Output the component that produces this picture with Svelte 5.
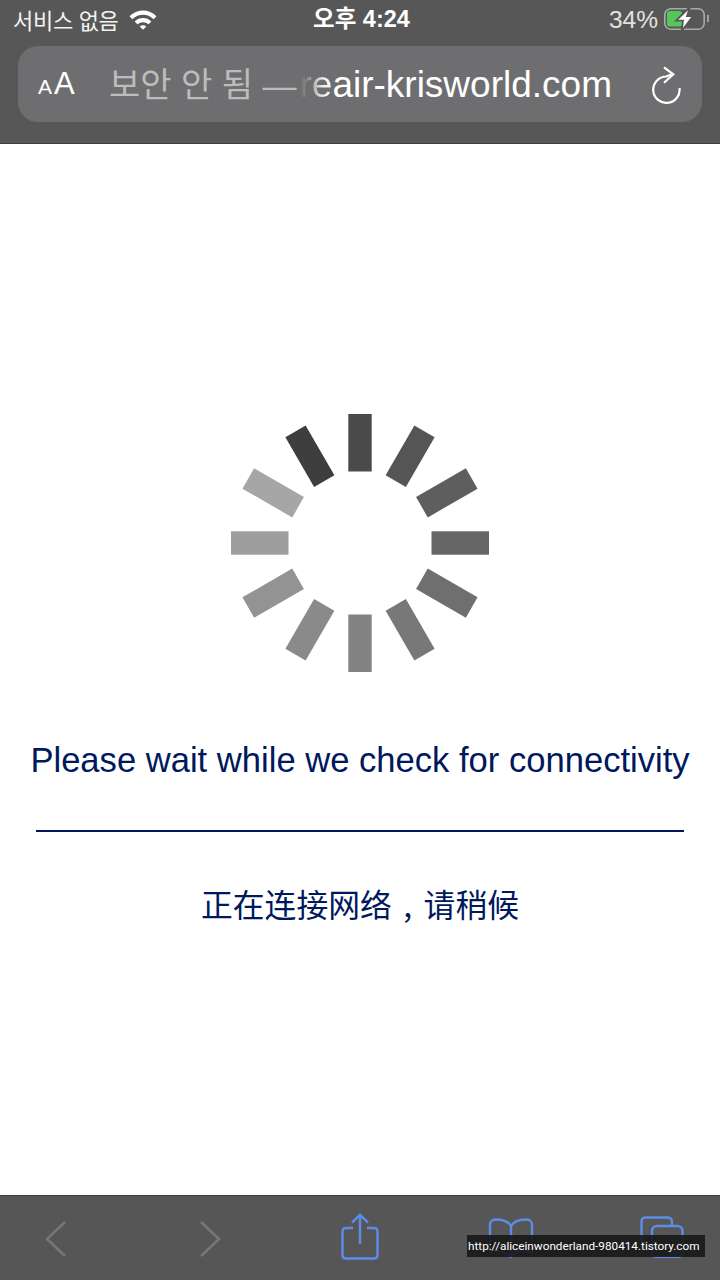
<script>
  const bars = [
    '#4a4a4a', '#555555', '#5e5e5e', '#666666', '#6f6f6f', '#787878',
    '#828282', '#8a8a8a', '#939393', '#9e9e9e', '#a6a6a6', '#3e3e3e'
  ]
</script>

<div class="screen">
  <header>
    <div class="status">
      <div class="left">
        <span class="carrier">서비스 없음</span>
        <svg class="wifi" width="30" height="22" viewBox="0 0 30 22">
          <path d="M1.5 8.2 C9 0.6 21 0.6 28.5 8.2 L25.6 11.2 C19.6 5.4 10.4 5.4 4.4 11.2 Z" fill="#fff"/>
          <path d="M6.6 13.4 C11.4 8.8 18.6 8.8 23.4 13.4 L20.5 16.3 C17.2 13.4 12.8 13.4 9.5 16.3 Z" fill="#fff"/>
          <path d="M11.6 18.4 C13.6 16.7 16.4 16.7 18.4 18.4 L15 21.8 Z" fill="#fff"/>
        </svg>
      </div>
      <span class="time">오후 4:24</span>
      <div class="right">
        <span class="pct">34%</span>
        <svg width="48" height="26" viewBox="0 0 48 26">
          <rect x="2.8" y="2.8" width="39.4" height="20.4" rx="6" fill="none" stroke="#a9a9a9" stroke-width="1.6"/>
          <rect x="5" y="5" width="15" height="15.5" rx="2.5" fill="#55c75a"/>
          <path d="M46 9 V16" fill="none" stroke="#a9a9a9" stroke-width="1.8"/>
          <path d="M28 1 L14 14.7 L21 14.7 L19.7 25 L31 10 L25 10 Z" fill="#fff" stroke="#575757" stroke-width="1.8"/>
        </svg>
      </div>
    </div>
    <div class="urlbar">
      <span class="aa"><small>A</small>A</span>
      <span class="url"><span class="dim">보안 안 됨 — </span><span class="fade">re</span>air-krisworld.com</span>
      <svg class="reload" width="32" height="40" viewBox="0 0 32 40">
        <path d="M23 10.5 Q19 11 16.3 12.5 A13.2 13.2 0 1 0 29.5 24" fill="none" stroke="#fff" stroke-width="2.2"/>
        <path d="M14 3.3 L23.3 10.4 L14 18.7" fill="none" stroke="#fff" stroke-width="2.2"/>
      </svg>
    </div>
  </header>

  <main>
    <svg class="spinner" width="260" height="260" viewBox="-130 -130 260 260">
      {#each bars as fill, i}
        <rect x="-11.7" y="-129" width="23.4" height="57.5" {fill} transform="rotate({i * 30})"/>
      {/each}
    </svg>
    <p class="en">Please wait while we check for connectivity</p>
    <hr />
    <p class="zh">正在连接网络<span class="comma">,</span>请稍候</p>
  </main>

  <footer>
    <svg class="nav" width="24" height="38" viewBox="0 0 24 38">
      <path d="M21 2 L3 19 L21 36" fill="none" stroke="#767676" stroke-width="2.6"/>
    </svg>
    <svg class="nav" width="24" height="38" viewBox="0 0 24 38">
      <path d="M3 2 L21 19 L3 36" fill="none" stroke="#767676" stroke-width="2.6"/>
    </svg>
    <svg class="share" width="38" height="48" viewBox="0 0 38 48">
      <path d="M12 15 H5 Q1.5 15 1.5 18.5 V42 Q1.5 45.5 5 45.5 H33 Q36.5 45.5 36.5 42 V18.5 Q36.5 15 33 15 H26" fill="none" stroke="#5b8ee8" stroke-width="2.4"/>
      <path d="M19 31 V2 M11 9.5 L19 2 L27 9.5" fill="none" stroke="#5b8ee8" stroke-width="2.4"/>
    </svg>
    <svg class="book" width="46" height="40" viewBox="0 0 46 40">
      <path d="M23 8 C20 3 15 1.5 8 1.5 C5 1.5 2 3 2 6 V35 C9 33 18 33 23 39 C28 33 37 33 44 35 V6 C44 3 41 1.5 38 1.5 C31 1.5 26 3 23 8 Z M23 8 V39" fill="none" stroke="#5b8ee8" stroke-width="2.4"/>
    </svg>
    <svg class="tabs" width="44" height="42" viewBox="0 0 44 42">
      <path d="M11 32 H6 Q1.5 32 1.5 27.5 V6 Q1.5 1.5 6 1.5 H27 Q32 1.5 32 6 V9.5" fill="none" stroke="#5b8ee8" stroke-width="2.4"/>
      <rect x="12" y="10" width="30.5" height="31" rx="5" fill="none" stroke="#5b8ee8" stroke-width="2.4"/>
    </svg>
    <div class="mark">http://aliceinwonderland-980414.tistory.com</div>
  </footer>
</div>

<style>
  :global(body) {
    margin: 0;
    background: #fff;
  }

  .screen {
    position: relative;
    display: flex;
    flex-direction: column;
    width: 720px;
    height: 1280px;
    overflow: hidden;
    font-family: "Liberation Sans", "Noto Sans CJK KR", sans-serif;
  }

  header {
    box-sizing: border-box;
    height: 144px;
    padding: 0 18px;
    background: #575757;
    border-bottom: 1px solid #3f3f3f;
    color: #fff;
  }

  .status {
    display: flex;
    align-items: center;
    justify-content: space-between;
    height: 38px;
    margin: 0 -18px 8px;
    padding: 0 10px 0 13px;
  }

  .left, .right {
    display: flex;
    align-items: center;
    gap: 9px;
    width: 200px;
  }

  .right {
    justify-content: flex-end;
    gap: 4px;
  }

  .carrier {
    font-size: 22px;
    color: #f2f2f2;
    letter-spacing: -0.3px;
  }

  .time {
    font-size: 23.5px;
    font-weight: 700;
    line-height: 36px;
  }

  .pct {
    font-size: 24.5px;
    color: #e2e2e2;
    margin-top: 2px;
  }

  .urlbar {
    display: flex;
    align-items: center;
    height: 76px;
    padding: 0 20px;
    border-radius: 20px;
    background: #6e6e70;
  }

  .aa {
    width: 71px;
    font-size: 31px;
    flex: none;
  }

  .aa small {
    font-size: 21px;
    margin-right: 2px;
  }

  .url {
    flex: 1;
    font-size: 37px;
    line-height: 70px;
    white-space: nowrap;
    margin-top: 2px;
  }

  .dim {
    font-size: 34px;
    color: #bcbcbc;
  }

  .fade {
    margin-left: 3px;
    background: linear-gradient(90deg, #6e6e70 0%, #8a8a8c 25%, #f2f2f2 75%);
    -webkit-background-clip: text;
    background-clip: text;
    color: transparent;
  }

  main {
    flex: 1;
    display: flex;
    flex-direction: column;
    align-items: center;
    padding-top: 269px;
    color: #00185c;
  }

  .spinner {
    flex: none;
  }

  .en {
    margin: 67px 0 0;
    font-size: 34.6px;
    line-height: 40px;
    white-space: nowrap;
  }

  hr {
    width: 648px;
    height: 2px;
    margin: 50px 0 0;
    border: 0;
    background: #00185c;
  }

  .zh {
    margin: 49px 0 0;
    font-family: "Noto Sans CJK SC", sans-serif;
    font-size: 31.8px;
    line-height: 44px;
  }

  .comma {
    display: inline-block;
    width: 1em;
    text-align: center;
  }

  footer {
    position: relative;
    box-sizing: border-box;
    display: flex;
    align-items: center;
    height: 85px;
    background: #565656;
    border-top: 1px solid #3f3f3f;
  }

  footer svg {
    position: absolute;
  }

  .nav:nth-child(1) {
    left: 44px;
    top: 24px;
  }

  .nav:nth-child(2) {
    left: 198px;
    top: 24px;
  }

  .share {
    left: 341px;
    top: 17px;
  }

  .book {
    left: 488px;
    top: 22px;
  }

  .tabs {
    left: 640px;
    top: 20px;
  }

  .mark {
    position: absolute;
    left: 467px;
    top: 39px;
    box-sizing: border-box;
    width: 238px;
    height: 22px;
    padding-left: 1px;
    background: rgba(25, 25, 25, 0.92);
    color: #fff;
    font-family: Roboto, sans-serif;
    font-size: 11.75px;
    line-height: 22px;
    white-space: nowrap;
  }
</style>
